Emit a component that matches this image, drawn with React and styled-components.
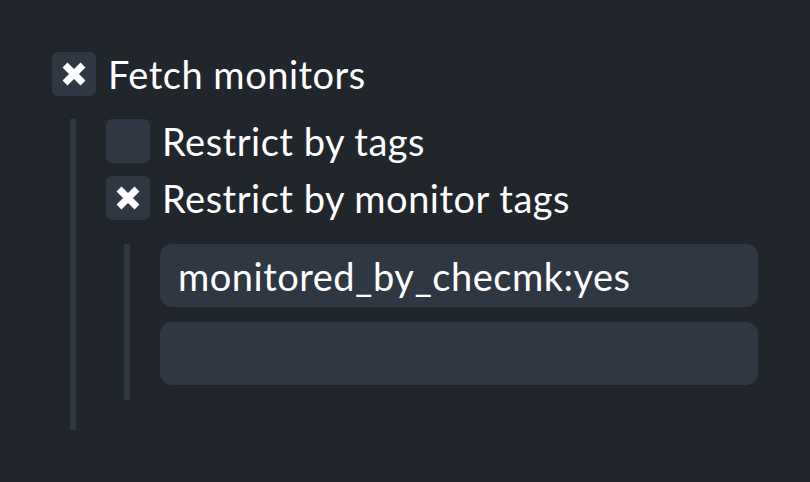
import React from 'react'
import styled, { createGlobalStyle } from 'styled-components';

const GlobalStyle = createGlobalStyle`
  html, body {
    margin: 0;
    padding: 0;
    background: #21262d;
  }
  body {
    font-family: Lato, "Noto Sans", sans-serif;
    color: #ffffff;
  }
`;

const Page = styled.div`
  box-sizing: border-box;
  width: 810px;
  height: 482px;
  padding: 52px 52px 0 52px;
  background: #21262d;
`;

const Row = styled.div`
  display: flex;
  align-items: center;
  gap: 12px;
  height: 44px;
  margin-bottom: ${p => p.$gap || 0}px;
`;

const Box = styled.div`
  width: 44px;
  height: 44px;
  flex-shrink: 0;
  border-radius: 6px;
  background: #2f3743;
  display: flex;
  align-items: center;
  justify-content: center;
`;

const Label = styled.span`
  font-size: 38px;
  letter-spacing: 0.5px;
  line-height: 44px;
  white-space: nowrap;
`;

const Nested = styled.div`
  margin-left: 18px;
  margin-top: ${p => p.$top}px;
  border-left: 6px solid #2f3743;
  padding-left: 30px;
  padding-bottom: ${p => p.$bottom}px;
`;

const InputList = styled.div`
  display: flex;
  flex-direction: column;
  gap: 15px;
`;

const TextInput = styled.div`
  box-sizing: border-box;
  height: 63px;
  border-radius: 12px;
  background: #2f3743;
  padding: 0 18px;
  display: flex;
  align-items: center;
  font-size: 38px;
  letter-spacing: 0.5px;
  white-space: nowrap;
`;

const Cross = () => (
  <svg width="26" height="24" viewBox="0 0 26 24">
    <path d="M4 3 L22 21 M22 3 L4 21" stroke="#ffffff" strokeWidth="7" strokeLinecap="butt" />
  </svg>
);

const Checkbox = ({ checked, label, gap }) => (
  <Row $gap={gap}>
    <Box>{checked && <Cross />}</Box>
    <Label>{label}</Label>
  </Row>
);

const App = () => {
  return (
    <Page>
      <GlobalStyle />
      <Checkbox checked label="Fetch monitors" />
      <Nested $top={23} $bottom={30}>
        <Checkbox label="Restrict by tags" gap={13} />
        <Checkbox checked label="Restrict by monitor tags" />
        <Nested $top={24} $bottom={15}>
          <InputList>
            <TextInput>monitored_by_checmk:yes</TextInput>
            <TextInput />
          </InputList>
        </Nested>
      </Nested>
    </Page>
  )
}

export default App
